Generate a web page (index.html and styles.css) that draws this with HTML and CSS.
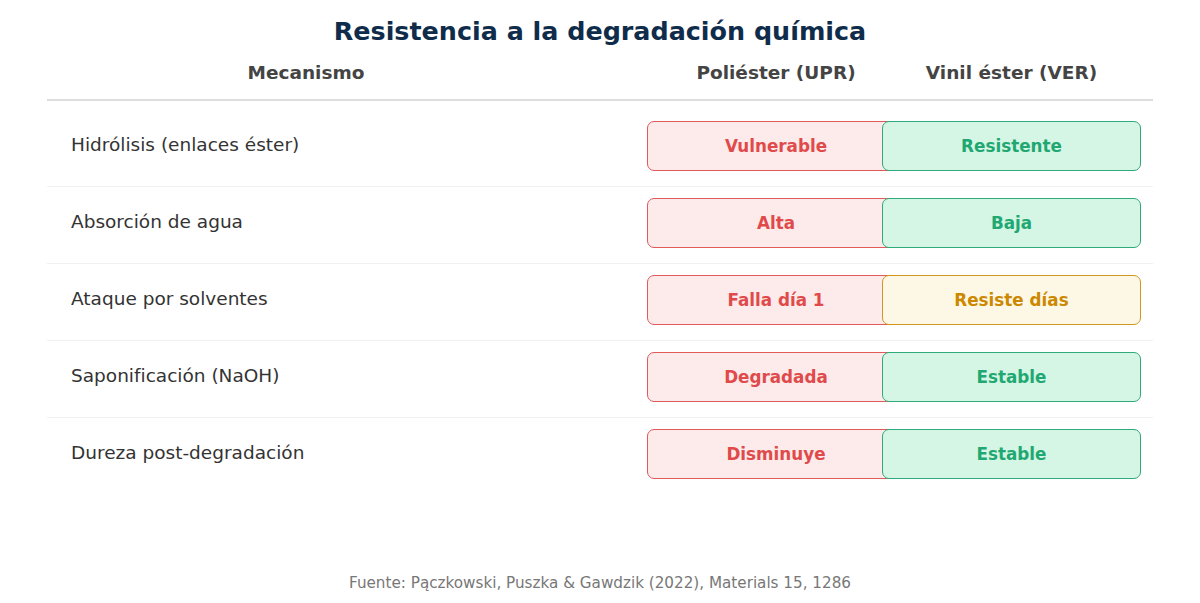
FILE: index.html
```html
<!DOCTYPE html>
<html lang="es">
<head>
<meta charset="utf-8">
<link rel="stylesheet" href="styles.css">
</head>
<body>
<div class="page">
  <h1 class="title">Resistencia a la degradación química</h1>
  <div class="table">
    <div class="head">
      <div class="h-mech">Mecanismo</div>
      <div class="h-upr">Poliéster (UPR)</div>
      <div class="h-ver">Vinil éster (VER)</div>
    </div>
    <div class="row first">
      <div class="label">Hidrólisis (enlaces éster)</div>
      <div class="pill red">Vulnerable</div>
      <div class="pill green over">Resistente</div>
    </div>
    <div class="row">
      <div class="label">Absorción de agua</div>
      <div class="pill red">Alta</div>
      <div class="pill green over">Baja</div>
    </div>
    <div class="row">
      <div class="label">Ataque por solventes</div>
      <div class="pill red">Falla día 1</div>
      <div class="pill yellow over">Resiste días</div>
    </div>
    <div class="row">
      <div class="label">Saponificación (NaOH)</div>
      <div class="pill red">Degradada</div>
      <div class="pill green over">Estable</div>
    </div>
    <div class="row last">
      <div class="label">Dureza post-degradación</div>
      <div class="pill red">Disminuye</div>
      <div class="pill green over">Estable</div>
    </div>
  </div>
  <div class="footer">Fuente: Pączkowski, Puszka &amp; Gawdzik (2022), Materials 15, 1286</div>
</div>
</body>
</html>
```

FILE: styles.css
```css
* { box-sizing: border-box; }
html, body {
  margin: 0;
  padding: 0;
  background: #ffffff;
}
body {
  font-family: "DejaVu Sans", "Noto Sans", sans-serif;
}
.page {
  width: 1200px;
  height: 603px;
  display: flex;
  flex-direction: column;
}
.title {
  margin: 0;
  padding-top: 15px;
  height: 52px;
  text-align: center;
  font-size: 25.4px;
  line-height: 32px;
  font-weight: bold;
  color: #0f2d4b;
}
.table {
  margin: 0 47px;
  display: flex;
  flex-direction: column;
}
.head {
  display: flex;
  align-items: flex-start;
  height: 49px;
  padding-top: 9px;
  border-bottom: 2px solid #dedede;
  font-size: 18.5px;
  line-height: 24px;
  font-weight: bold;
  color: #444444;
}
.h-mech {
  width: 518px;
  text-align: center;
}
.h-upr {
  margin-left: 82px;
  width: 258px;
  text-align: center;
}
.h-ver {
  margin-left: -23px;
  width: 259px;
  text-align: center;
}
.row {
  display: flex;
  align-items: center;
  padding: 11px 12px 15px 0;
  border-bottom: 1px solid #f1f1f1;
}
.row.first { padding-top: 20px; }
.row.last { border-bottom: none; }
.label {
  flex: 1;
  padding-left: 24px;
  padding-bottom: 3px;
  font-size: 18.5px;
  color: #333333;
}
.pill {
  height: 50px;
  border: 1.3px solid;
  border-radius: 7px;
  display: flex;
  align-items: center;
  justify-content: center;
  font-size: 16.8px;
  font-weight: bold;
}
.pill.red {
  width: 258px;
  background: #fdeaea;
  border-color: #e05a5a;
  color: #e04a4a;
}
.pill.over {
  width: 259px;
  margin-left: -23px;
  position: relative;
}
.pill.green {
  background: #d5f5e5;
  border-color: #2faa7b;
  color: #1fa872;
}
.pill.yellow {
  background: #fdf8e6;
  border-color: #d0961f;
  color: #cc8800;
}
.footer {
  margin-top: auto;
  padding-bottom: 11px;
  text-align: center;
  font-size: 15.2px;
  color: #777777;
}
```
